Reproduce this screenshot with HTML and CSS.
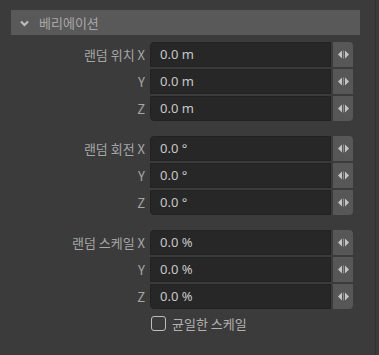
FILE: index.html
```html
<!DOCTYPE html>
<html>
<head>
<link rel="stylesheet" href="styles.css">
</head>
<body>
	<div id="painel">
		<div class="cabecalho">
			<svg class="seta" width="9" height="7" viewBox="0 0 9 7"><path d="M1 1.5 L4.5 5 L8 1.5" fill="none" stroke="#bdbdbd" stroke-width="2.2"/></svg>
			<span>베리에이션</span>
		</div>

		<div class="grupo">
			<div class="linha primeira"><label>랜덤 위치 X</label><div class="campo">0.0 m</div><div class="botao"><svg width="11" height="9" viewBox="0 0 11 9"><path d="M0 4.5 L4 0.5 L4 8.5 Z M11 4.5 L7 0.5 L7 8.5 Z" fill="#c4c4c4"/><rect x="5" y="0.5" width="1" height="8" fill="#8a8a8a"/></svg></div></div>
			<div class="linha"><label>Y</label><div class="campo">0.0 m</div><div class="botao"><svg width="11" height="9" viewBox="0 0 11 9"><path d="M0 4.5 L4 0.5 L4 8.5 Z M11 4.5 L7 0.5 L7 8.5 Z" fill="#c4c4c4"/><rect x="5" y="0.5" width="1" height="8" fill="#8a8a8a"/></svg></div></div>
			<div class="linha ultima"><label>Z</label><div class="campo">0.0 m</div><div class="botao"><svg width="11" height="9" viewBox="0 0 11 9"><path d="M0 4.5 L4 0.5 L4 8.5 Z M11 4.5 L7 0.5 L7 8.5 Z" fill="#c4c4c4"/><rect x="5" y="0.5" width="1" height="8" fill="#8a8a8a"/></svg></div></div>
		</div>

		<div class="grupo">
			<div class="linha primeira"><label>랜덤 회전 X</label><div class="campo">0.0 °</div><div class="botao"><svg width="11" height="9" viewBox="0 0 11 9"><path d="M0 4.5 L4 0.5 L4 8.5 Z M11 4.5 L7 0.5 L7 8.5 Z" fill="#c4c4c4"/><rect x="5" y="0.5" width="1" height="8" fill="#8a8a8a"/></svg></div></div>
			<div class="linha"><label>Y</label><div class="campo">0.0 °</div><div class="botao"><svg width="11" height="9" viewBox="0 0 11 9"><path d="M0 4.5 L4 0.5 L4 8.5 Z M11 4.5 L7 0.5 L7 8.5 Z" fill="#c4c4c4"/><rect x="5" y="0.5" width="1" height="8" fill="#8a8a8a"/></svg></div></div>
			<div class="linha ultima"><label>Z</label><div class="campo">0.0 °</div><div class="botao"><svg width="11" height="9" viewBox="0 0 11 9"><path d="M0 4.5 L4 0.5 L4 8.5 Z M11 4.5 L7 0.5 L7 8.5 Z" fill="#c4c4c4"/><rect x="5" y="0.5" width="1" height="8" fill="#8a8a8a"/></svg></div></div>
		</div>

		<div class="grupo fim">
			<div class="linha primeira"><label>랜덤 스케일 X</label><div class="campo">0.0 %</div><div class="botao"><svg width="11" height="9" viewBox="0 0 11 9"><path d="M0 4.5 L4 0.5 L4 8.5 Z M11 4.5 L7 0.5 L7 8.5 Z" fill="#c4c4c4"/><rect x="5" y="0.5" width="1" height="8" fill="#8a8a8a"/></svg></div></div>
			<div class="linha"><label>Y</label><div class="campo">0.0 %</div><div class="botao"><svg width="11" height="9" viewBox="0 0 11 9"><path d="M0 4.5 L4 0.5 L4 8.5 Z M11 4.5 L7 0.5 L7 8.5 Z" fill="#c4c4c4"/><rect x="5" y="0.5" width="1" height="8" fill="#8a8a8a"/></svg></div></div>
			<div class="linha ultima"><label>Z</label><div class="campo">0.0 %</div><div class="botao"><svg width="11" height="9" viewBox="0 0 11 9"><path d="M0 4.5 L4 0.5 L4 8.5 Z M11 4.5 L7 0.5 L7 8.5 Z" fill="#c4c4c4"/><rect x="5" y="0.5" width="1" height="8" fill="#8a8a8a"/></svg></div></div>
		</div>

		<div class="opcao">
			<span class="caixa"></span>
			<span>균일한 스케일</span>
		</div>
	</div>
</body>
</html>
```

FILE: styles.css
```css
html, body{
	margin: 0;
	background-color: #3b3b3b;
}

div#painel{
	width: 376px;
	height: 355px;
	box-sizing: border-box;
	border-right: 1px solid #303030;
	padding: 10px 0 0 11px;
	font-family: "Noto Sans CJK KR", "Noto Sans", sans-serif;
	font-size: 13px;
	color: #ababab;
}

.cabecalho{
	width: 349px;
	height: 25px;
	background-color: #595959;
	display: flex;
	align-items: center;
	padding-left: 9px;
	box-sizing: border-box;
	margin-bottom: 7px;
}

.cabecalho .seta{
	margin-right: 10px;
	margin-top: 1px;
}

.cabecalho span{
	color: #a8a8a8;
	line-height: 1;
}

.grupo{
	margin-bottom: 15px;
}

.grupo.fim{
	margin-bottom: 6px;
}

.linha{
	display: flex;
	height: 25px;
	margin-bottom: 2px;
}

.linha label{
	width: 134px;
	padding-right: 5px;
	text-align: right;
	line-height: 25px;
	color: #a6a6a6;
}

.campo{
	width: 181px;
	height: 25px;
	box-sizing: border-box;
	background-color: #272727;
	border: 1px solid #222;
	padding-left: 9px;
	line-height: 23px;
	color: #c8c8c8;
	font-family: "Noto Sans", sans-serif;
	margin-right: 2px;
}

.botao{
	width: 20px;
	height: 25px;
	background-color: #575757;
	display: flex;
	align-items: center;
	justify-content: center;
}

.primeira .campo{ border-top-left-radius: 4px; }
.primeira .botao{ border-top-right-radius: 4px; }
.ultima .campo{ border-bottom-left-radius: 4px; }
.ultima .botao{ border-bottom-right-radius: 4px; }

.opcao{
	display: flex;
	align-items: center;
	margin-left: 140px;
	height: 16px;
}

.caixa{
	width: 13px;
	height: 13px;
	border: 1.5px solid #bdbdbd;
	border-radius: 3px;
	margin-right: 6px;
}

.opcao span:last-child{
	color: #b0b0b0;
}
```
